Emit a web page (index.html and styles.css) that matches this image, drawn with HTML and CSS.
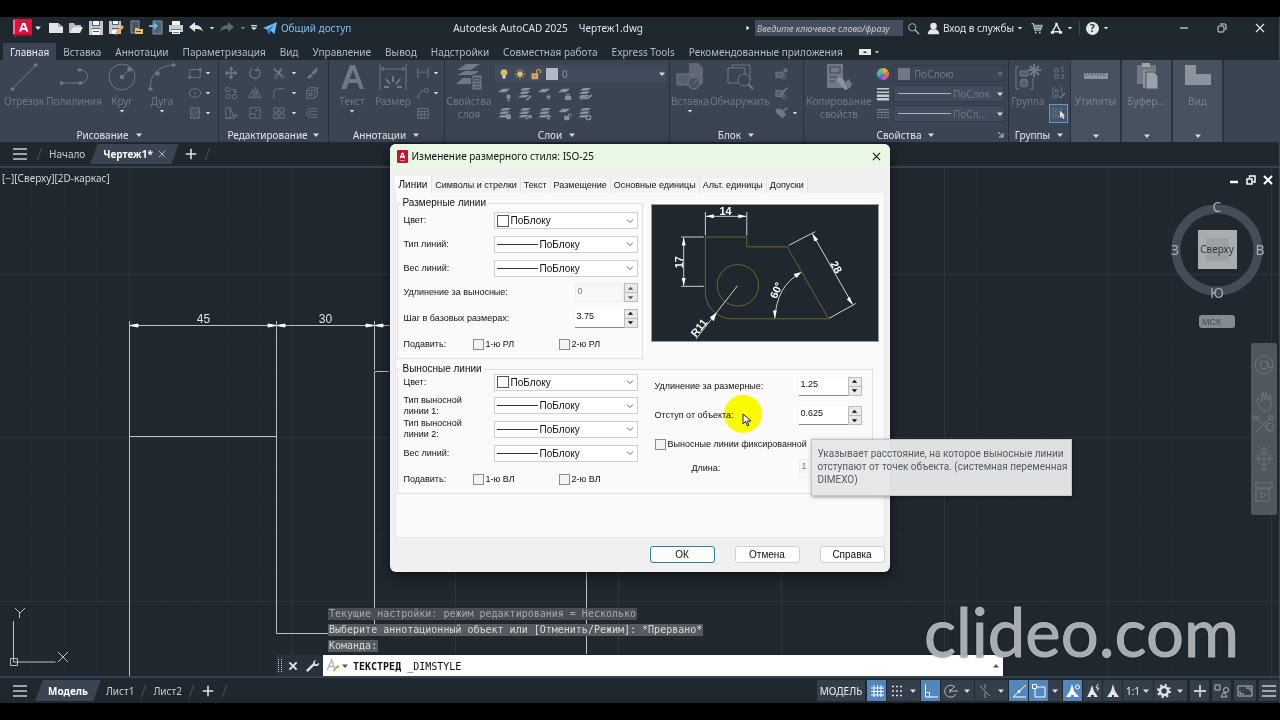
FILE: index.html
```html
<!DOCTYPE html>
<html lang="ru">
<head>
<meta charset="utf-8">
<title>Autodesk AutoCAD 2025 — Чертеж1.dwg</title>
<link rel="stylesheet" href="styles.css">
</head>
<body>
<svg class="defs" aria-hidden="true">
  <defs>
    <symbol id="down" viewBox="0 0 8 8"><path d="M1 2.500h6L4 6z" fill="currentColor"/></symbol>
    <symbol id="up" viewBox="0 0 8 8"><path d="M1 5.500h6L4 2z" fill="currentColor"/></symbol>
    <symbol id="chev" viewBox="0 0 8 8"><path d="M1 2.500l3 3 3-3" fill="none" stroke="currentColor"/></symbol>
    <symbol id="burger" viewBox="0 0 16 16"><path d="M1 3h14M1 8h14M1 13h14" stroke="currentColor" stroke-width="1.500"/></symbol>
    <symbol id="plus" viewBox="0 0 16 16"><path d="M8 2v12M2 8h12" stroke="currentColor" stroke-width="1.800"/></symbol>
    <symbol id="cross" viewBox="0 0 10 10"><path d="M1 1l8 8M9 1l-8 8" stroke="currentColor" stroke-width="1.200"/></symbol>
    <symbol id="layers" viewBox="0 0 16 16"><path d="M6 1h9l-4 3H2zM5 5h9l-4 3H1zM4 9h9l-4 3H0z" fill="currentColor"/></symbol>
    <symbol id="sheet" viewBox="0 0 16 16"><path d="M5 2h9l-5 4H0z" fill="currentColor"/></symbol>
  </defs>
</svg>

<div class="app">
  <header class="titlebar">
    <button class="logo" aria-label="Меню приложения"><svg viewBox="0 0 20 18"><path d="M1 1l3-1v18l-3-2z" fill="#f4708c"/><path d="M3 0h17v17H3z" fill="#dd1240"/><path d="M1 15h18v2H1z" fill="#a80d31"/><path d="M7 12.500L10.200 4h3l3.200 8.500h-2.300l-.6-1.800h-3.700l-.6 1.800zM10.300 9h2.600l-1.300-3.700z" fill="#fff"/></svg></button>
    <button class="tiny" aria-label="Ещё"><svg><use href="#down"/></svg></button>
    <div class="quick">
      <button aria-label="Создать"><svg viewBox="0 0 16 16"><path d="M1 3h9l5 4v6H1z" fill="#dfe2e6"/><path d="M10 3v4h5" fill="#a9afb8"/></svg></button>
      <button aria-label="Открыть"><svg viewBox="0 0 16 16"><path d="M1 13V3h5l1 2h6v2H5z" fill="#b9bfc7"/><path d="M5 7h10l-3 6H1z" fill="#e4e6e9"/></svg></button>
      <button aria-label="Сохранить"><svg viewBox="0 0 16 16"><path d="M1 1h14v14H1z" fill="#c4c8cd"/><path d="M4 1h8v5H4z" fill="#59616d"/><path d="M5 1h6v4H5zM4 9h8v6H4z" fill="#f4f4f4"/><path d="M4 8h8v1H4zM5 11h6v1H5z" fill="#59616d"/></svg></button>
      <button aria-label="Сохранить как"><svg viewBox="0 0 16 16"><path d="M1 1h12v13H1z" fill="#c4c8cd"/><path d="M4 1h7v4H4zM4 8h7v1H4z" fill="#59616d"/><path d="M5 1h5v3H5zM4 10h5v4H4z" fill="#fff"/><path d="M14 5l2 2-6 7-3 1 1-3z" fill="#e7b25c"/></svg></button>
      <button aria-label="Открыть из веба"><svg viewBox="0 0 16 16"><path d="M3 1h8v12H3z" fill="#4b535f" stroke="#8b929c"/><path d="M7 14V8h3l1 1h4v5z" fill="#f0bd62"/><path d="M8 11h5v1H8z" fill="#5c4a28"/></svg></button>
      <button aria-label="Сохранить в веб"><svg viewBox="0 0 16 16"><path d="M5 1h9v13H5z" fill="#56606c" stroke="#8b929c"/><path d="M1 5h5V2l4 4-4 4V7H1z" fill="#62b5ee"/></svg></button>
      <button aria-label="Печать"><svg viewBox="0 0 16 16"><path d="M4 1h8v4H4z" fill="#f4f4f4"/><path d="M1 5h14v7H1z" fill="#c9cdd2"/><path d="M4 9h8v5H4z" fill="#fff"/><path d="M3 9h10v1H3zM5 12h6v1H5z" fill="#4e7fb0"/></svg></button>
      <button aria-label="Отменить"><svg viewBox="0 0 16 16"><path d="M1 7l6-5v3c5 0 7 3 8 7-2-3-4-3-8-3v3z" fill="#e4e6e9"/></svg></button>
      <button class="arrow" aria-label="Список отмены"><svg><use href="#down"/></svg></button>
      <button aria-label="Повторить"><svg viewBox="0 0 16 16"><path d="M15 7L9 2v3C4 5 2 8 1 12c2-3 4-3 8-3v3z" fill="#5d6772"/></svg></button>
      <button class="arrow dim" aria-label="Список повтора"><svg><use href="#down"/></svg></button>
      <button class="arrow" aria-label="Настройка панели"><svg viewBox="0 0 8 8"><path d="M0 0h8v1.500H0zM0 3h8L4 7z" fill="#dfe2e6"/></svg></button>
    </div>
    <button class="share"><svg viewBox="0 0 16 16"><path d="M0 8L16 1l-3 14-4-4-3 4-1-5z" fill="#6cbcf2"/><path d="M5 10l8-6-5 7-2 4z" fill="#2c76ad"/></svg>Общий доступ</button>
    <h1>Autodesk AutoCAD 2025<span>Чертеж1.dwg</span></h1>
    <div class="account">
      <svg class="a6" viewBox="0 0 8 8"><path d="M2 1l4 3-4 3z" fill="#fff"/></svg>
      <input class="search" type="text" placeholder="Введите ключевое слово/фразу" aria-label="Поиск">
      <button aria-label="Найти"><svg viewBox="0 0 16 16" fill="none" stroke="#c5cad0"><circle cx="6.500" cy="6.500" r="4.500"/><path d="M10 10l5 5" stroke-width="1.500"/></svg></button>
      <button class="signin"><svg viewBox="0 0 16 16"><circle cx="8" cy="5" r="4" fill="#e4e6e9"/><path d="M1 15c0-4 3-6 5-6h4c2 0 5 2 5 6z" fill="#e4e6e9"/></svg>Вход в службы<svg class="a6"><use href="#down"/></svg></button>
      <button class="cart" aria-label="Магазин"><svg viewBox="0 0 16 16" fill="none" stroke="#b5bbc3" stroke-width="1.300"><path d="M2 2h2l2 8h7l2-6H5M5 6h9M6 8h8"/><path d="M6 13h2M11 13h2" stroke-width="2"/></svg></button>
      <button class="cart" aria-label="Autodesk App"><svg viewBox="0 0 16 16" fill="none" stroke="#e4e6e9"><path d="M8 3L3 12h10z" stroke-width="1.800"/><path d="M8 1v3M1 13h4M11 13h4" stroke-width="3"/></svg></button>
      <svg class="a6"><use href="#down"/></svg>
      <i class="vsep"></i>
      <button class="help" aria-label="Справка">?</button>
      <svg class="a6"><use href="#down"/></svg>
    </div>
    <div class="winctl">
      <button aria-label="Свернуть"><svg viewBox="0 0 10 10"><path d="M1 5h8" stroke="#fff"/></svg></button>
      <button aria-label="Восстановить"><svg viewBox="0 0 10 10" fill="none" stroke="#dfe2e6"><rect x="1" y="3" width="6" height="6" rx="1"/><path d="M3 1h5q1 0 1 1v5"/></svg></button>
      <button aria-label="Закрыть"><svg><use href="#cross"/></svg></button>
    </div>
  </header>

  <nav class="ribbon-tabs">
    <button class="on">Главная</button><button>Вставка</button><button>Аннотации</button><button>Параметризация</button><button>Вид</button><button>Управление</button><button>Вывод</button><button>Надстройки</button><button>Совместная работа</button><button>Express Tools</button><button>Рекомендованные приложения</button>
    <button class="collapse" aria-label="Свернуть ленту"><svg viewBox="0 0 22 8"><path d="M1 1h12v6H1z" fill="#e4e6e9"/><path d="M5 5h4L7 3z" fill="#222b36"/><path d="M17 3h4l-2 2.500z" fill="#c5cad0"/></svg></button>
  </nav>

  <div class="ribbon">
    <section class="panel draw">
      <div class="body">
        <button class="big"><svg viewBox="0 0 28 28" class="ln"><path d="M2 26L26 2"/><path d="M1 25h3v2H1zM24 1h3v2h-3z" fill="currentColor"/></svg>Отрезок</button>
        <button class="big"><svg viewBox="0 0 28 28" class="ln"><path d="M1 20h20a6.500 6.500 0 0 0 0-13h-2"/><path d="M0 19h3v2H0zM18 6h3v2h-3zM19 19h3v2h-3z" fill="currentColor"/></svg>Полилиния</button>
        <button class="big"><svg viewBox="0 0 28 28" class="ln"><circle cx="14" cy="14" r="13"/><path d="M14 14l8-8"/><path d="M12.500 12.500h3v3h-3zM20 5h3v3h-3z" fill="currentColor"/></svg>Круг<svg class="a6"><use href="#down"/></svg></button>
        <button class="big"><svg viewBox="0 0 28 28" class="ln"><path d="M2 26C2 12 10 3 26 2"/><path d="M1 25h3v2H1zM8 9h3v3H8zM24 1h3v2h-3z" fill="currentColor"/></svg>Дуга<svg class="a6"><use href="#down"/></svg></button>
        <div class="small c2">
          <button aria-label="Прямоугольник"><svg viewBox="0 0 16 16" class="ln"><path d="M2 4h12v9H2z"/><path d="M1 12h2v2H1zM13 3h2v2h-2z" fill="currentColor"/></svg></button><svg class="a6"><use href="#down"/></svg>
          <button aria-label="Эллипс"><svg viewBox="0 0 16 16" class="ln"><ellipse cx="8" cy="8" rx="6.500" ry="5"/><path d="M7 8h2M8 7v2"/></svg></button><svg class="a6"><use href="#down"/></svg>
          <button aria-label="Штриховка"><svg viewBox="0 0 16 16" class="ln"><path d="M3 2h10v12H3zM3 6l4-4M3 10l8-8M3 14l10-11M6 14l7-8M10 14l3-4"/></svg></button><svg class="a6"><use href="#down"/></svg>
        </div>
      </div>
      <button class="ptitle">Рисование<svg class="a8"><use href="#down"/></svg></button>
    </section>

    <section class="panel edit">
      <div class="body">
        <div class="small c5">
          <button aria-label="Перенести"><svg viewBox="0 0 16 16" class="ln"><path d="M8 2v12M2 8h12M6 4l2-2 2 2M6 12l2 2 2-2M4 6L2 8l2 2M12 6l2 2-2 2" stroke-width="1.600"/></svg></button>
          <button aria-label="Повернуть"><svg viewBox="0 0 16 16" class="ln"><path d="M5 3a6 6 0 1 0 6 0M11 1v4H7" stroke-width="1.300"/></svg></button>
          <button aria-label="Обрезать"><svg viewBox="0 0 16 16" class="ln"><path d="M2 3l9 8M11 3l-5 7" stroke-width="2"/><circle cx="5" cy="12" r="2"/><circle cx="12" cy="12" r="2"/></svg></button><svg class="a6"><use href="#down"/></svg>
          <button aria-label="Стереть"><svg viewBox="0 0 16 16"><path d="M14 1v5l-4 4-3-2zM6 9l3 2-3 3H2z" fill="currentColor"/></svg></button>
          <button aria-label="Копировать"><svg viewBox="0 0 16 16" class="ln"><circle cx="4" cy="4" r="2.500"/><circle cx="5" cy="12" r="2.500"/><circle cx="12" cy="12" r="2.500"/><path d="M8 4h5v4M11 6l2 2 2-2"/></svg></button>
          <button aria-label="Зеркало"><svg viewBox="0 0 16 16" class="ln"><path d="M8 1v14M6 4v9H1zM10 4v9h5z"/></svg></button>
          <button aria-label="Сопряжение"><svg viewBox="0 0 16 16" class="ln"><path d="M2 14V9q0-6 6-6h6"/></svg></button><svg class="a6"><use href="#down"/></svg>
          <button aria-label="Расчленить"><svg viewBox="0 0 16 16" class="ln"><path d="M2 5h9v9H2zM2 5l3-3h9l-3 3M14 2v9l-3 3M5 8h3v3H5z"/></svg></button>
          <button aria-label="Растянуть"><svg viewBox="0 0 16 16" class="ln"><path d="M2 2h5v12H2zM7 2l5 12H2M9 11h6M13 9l2 2-2 2"/></svg></button>
          <button aria-label="Масштаб"><svg viewBox="0 0 16 16" class="ln"><path d="M2 2h12v12H2zM2 9h6v5M9 7V5h3"/></svg></button>
          <button aria-label="Массив"><svg viewBox="0 0 16 16" class="ln"><path d="M2 2h5v5H2zM9 2h5v5H9zM2 9h5v5H2zM9 9h5v5H9z"/></svg></button><svg class="a6"><use href="#down"/></svg>
          <button aria-label="Подобие"><svg viewBox="0 0 16 16" class="ln"><path d="M14 3H7a5 5 0 0 0 0 10h7M14 6H7a2 2 0 0 0 0 4h7"/></svg></button>
        </div>
      </div>
      <button class="ptitle">Редактирование<svg class="a8"><use href="#down"/></svg></button>
    </section>

    <section class="panel anno">
      <div class="body">
        <button class="big"><svg viewBox="0 0 28 28"><path d="M3 26L12 2h5l9 24h-4.500l-2-6h-9l-2 6zM11.500 16h6.500L15 7z" fill="currentColor"/></svg>Текст<svg class="a6"><use href="#down"/></svg></button>
        <button class="big"><svg viewBox="0 0 28 28" class="ln"><path d="M1 1v26M27 1v26M2 6h24M5 4L2 6l3 2M23 4l3 2-3 2"/><path d="M14 13v6M7 16l4 5M21 16l-4 5M5 24h5M18 24h5" stroke-width="2"/></svg>Размер</button>
        <div class="small c2">
          <button aria-label="Линейный"><svg viewBox="0 0 16 16" class="ln"><path d="M2 2v12M14 2v12M2 7h12"/></svg></button><svg class="a6"><use href="#down"/></svg>
          <button aria-label="Выноска"><svg viewBox="0 0 16 16" class="ln"><path d="M2 13q2-7 7-8M1 13h3"/><circle cx="12" cy="5" r="2.500"/></svg></button><svg class="a6"><use href="#down"/></svg>
          <button aria-label="Таблица"><svg viewBox="0 0 16 16" class="ln"><path d="M2 3h12v11H2zM2 6h12M2 10h12M6 6v8M10 6v8"/></svg></button>
        </div>
      </div>
      <button class="ptitle">Аннотации<svg class="a8"><use href="#down"/></svg></button>
    </section>

    <section class="panel lay">
      <div class="body">
        <button class="big"><svg viewBox="0 0 28 28"><path d="M11 1h14l-9 6H2zM10 8h14l-5 4H2zM8 15h8v6H1z" fill="currentColor"/><path d="M17 12h10v15H17z" fill="currentColor" stroke="#3b4453"/><path d="M19 15h6v3h-6zM19 21h6M19 24h6" fill="none" stroke="#3b4453"/></svg>Свойства<br>слоя</button>
        <div class="laybox">
          <div class="laycombo">
            <svg viewBox="0 0 12 16"><circle cx="6" cy="6" r="4.500" fill="#d9bb62"/><path d="M4 10h4v4H4z" fill="#d4d8dc"/></svg>
            <svg viewBox="0 0 14 16"><circle cx="7" cy="8" r="3.500" fill="#d9c063"/><path d="M7 1v14M0 8h14M2 3l10 10M12 3L2 13" stroke="#d9c063"/></svg>
            <svg viewBox="0 0 14 16"><path d="M1 7h9v8H1z" fill="#d8a560"/><path d="M8 7V4q0-2 2.500-2T13 4v3" fill="none" stroke="#d8a560" stroke-width="1.600"/><path d="M5 10h1v2H5z" fill="#433c30"/></svg>
            <i class="sw"></i>
            <select aria-label="Слой"><option>0</option></select><svg class="a8"><use href="#down"/></svg>
          </div>
          <div class="layicons">
            <button aria-label="Отключить"><svg viewBox="0 0 16 16"><use href="#sheet"/><circle cx="12" cy="11" r="2.500" fill="currentColor"/><path d="M11 14h2v2h-2z" fill="currentColor"/></svg></button>
            <button aria-label="Изолировать"><svg viewBox="0 0 16 16"><use href="#layers"/><path d="M10 15l5-5" stroke="currentColor" stroke-width="2"/></svg></button>
            <button aria-label="Заморозить"><svg viewBox="0 0 16 16"><use href="#sheet"/><path d="M12 8v7M9 10l6 3M15 10l-6 3" stroke="currentColor"/></svg></button>
            <button aria-label="Блокировать"><svg viewBox="0 0 16 16"><use href="#sheet"/><path d="M8 10h7v5H8z" fill="currentColor"/><path d="M10 10V8h3v2" fill="none" stroke="currentColor"/></svg></button>
            <button aria-label="Сделать текущим"><svg viewBox="0 0 16 16"><use href="#layers"/><path d="M2 13h9l5-4" fill="none" stroke="currentColor" stroke-width="2"/></svg></button>
            <button aria-label="Включить все"><svg viewBox="0 0 16 16"><use href="#layers"/><circle cx="12" cy="11" r="3" fill="currentColor"/></svg></button>
            <button aria-label="Отменить изоляцию"><svg viewBox="0 0 16 16"><use href="#layers"/><path d="M9 14l5-3M12 10h3v3" fill="none" stroke="currentColor" stroke-width="1.500"/></svg></button>
            <button aria-label="Разморозить"><svg viewBox="0 0 16 16"><use href="#layers"/><path d="M12 8v7M9 11h6M10 9l4 5M14 9l-4 5" stroke="currentColor"/></svg></button>
            <button aria-label="Разблокировать"><svg viewBox="0 0 16 16"><use href="#sheet"/><path d="M7 10h6v5H7z" fill="currentColor"/><path d="M12 10V8h3v3" fill="none" stroke="currentColor"/></svg></button>
            <button aria-label="Копировать слой"><svg viewBox="0 0 16 16"><use href="#layers"/><circle cx="12" cy="12" r="2.500" fill="none" stroke="currentColor" stroke-width="1.500"/></svg></button>
          </div>
        </div>
      </div>
      <button class="ptitle">Слои<svg class="a8"><use href="#down"/></svg></button>
    </section>

    <section class="panel block">
      <div class="body">
        <button class="big"><svg viewBox="0 0 28 28"><path d="M13 0h9l5 5v16H13z" fill="currentColor" opacity=".7"/><path d="M1 11h15v11H1z" fill="#59606c" stroke="currentColor"/><circle cx="18" cy="20" r="6" fill="#4b5462" stroke="currentColor"/><path d="M18 20l3-3" stroke="currentColor"/></svg>Вставка<svg class="a6"><use href="#down"/></svg></button>
        <button class="big"><svg viewBox="0 0 28 28" class="ln"><path d="M6 5V2h18v15M2 5h17v7M2 5v15h11"/><circle cx="18" cy="17" r="6"/><path d="M22 21l5 5" stroke-width="2"/></svg>Обнаружить</button>
        <div class="small c2">
          <button aria-label="Создать блок"><svg viewBox="0 0 16 16" class="ln"><path d="M1 7h8v6H1z" fill="#59606c"/><circle cx="10" cy="12" r="2.500"/><path d="M12 2v6M9 5h6M10 3l4 4M14 3l-4 4"/></svg></button><i></i>
          <button aria-label="Редактор блоков"><svg viewBox="0 0 16 16" class="ln"><path d="M1 5h8v7H1z" fill="#59606c"/><circle cx="10" cy="12" r="2.500"/><path d="M7 10l7-8" stroke-width="2"/></svg></button><i></i>
          <button aria-label="Атрибуты"><svg viewBox="0 0 16 16"><path d="M1 3h6l6 7-5 4-7-7z" fill="currentColor"/><path d="M6 9l8-7" stroke="currentColor" stroke-width="2"/></svg></button><svg class="a6"><use href="#down"/></svg>
        </div>
      </div>
      <button class="ptitle">Блок<svg class="a8"><use href="#down"/></svg></button>
    </section>

    <section class="panel props">
      <div class="body">
        <button class="big"><svg viewBox="0 0 28 28"><path d="M2 1h16v24H2z" fill="currentColor"/><path d="M5 4h10v6H5zM5 14h8M5 18h5" fill="none" stroke="#3b4453"/><path d="M13 13l6 4 4 9-3 1-8-9z" fill="#8c929a"/><path d="M19 20l5-4 3 6-3 4z" fill="currentColor"/></svg>Копирование<br>свойств</button>
        <div class="pgrid">
          <svg viewBox="0 0 16 16"><path d="M8 8V1a7 7 0 0 1 6 3.500z" fill="#f1b12f"/><path d="M8 8l6-3.500a7 7 0 0 1 0 7z" fill="#f0704a"/><path d="M8 8l6 3.500A7 7 0 0 1 8 15z" fill="#c85ba8"/><path d="M8 8v7a7 7 0 0 1-6-3.500z" fill="#7a5cc4"/><path d="M8 8l-6 3.500a7 7 0 0 1 0-7z" fill="#3fb4cf"/><path d="M8 8L2 4.500A7 7 0 0 1 8 1z" fill="#6cc070"/></svg>
          <div class="pcombo off"><i class="sw"></i><select aria-label="Цвет объекта"><option>ПоСлою</option></select><svg class="a8"><use href="#down"/></svg></div>
          <svg viewBox="0 0 16 16"><path d="M1 2h14M1 6h14" stroke="#c5cad0" stroke-width="1.500"/><path d="M1 10h14M1 14h14" stroke="#c5cad0" stroke-width="3"/></svg>
          <div class="pcombo"><i class="rule"></i><select aria-label="Вес линий объекта"><option>ПоСлок</option></select><svg class="a8"><use href="#down"/></svg></div>
          <svg viewBox="0 0 16 16"><path d="M1 3h14M1 6h14" stroke="#8f96a0"/><path d="M1 9h14M1 12h14" stroke="#8f96a0" stroke-dasharray="3 1"/></svg>
          <div class="pcombo"><i class="rule"></i><select aria-label="Тип линий объекта"><option>ПоСл...</option></select><svg class="a8"><use href="#down"/></svg></div>
        </div>
      </div>
      <button class="ptitle">Свойства<svg class="a8"><use href="#down"/></svg></button>
      <svg class="launch" viewBox="0 0 8 8"><path d="M1 1l5 5M6 2v4H2" fill="none" stroke="#c5cad0"/></svg>
    </section>

    <section class="panel groups">
      <div class="body">
        <button class="big"><svg viewBox="0 0 28 28" class="ln"><path d="M5 4H2v22h3M16 26h3V15"/><circle cx="10" cy="20" r="4" fill="#59606c"/><path d="M6 8h8v5H6z" fill="#59606c"/><path d="M20 1v13M14 7h13M16 3l9 9M25 3l-9 9" stroke-width="2"/></svg>Группа</button>
        <div class="small c1">
          <button aria-label="Разгруппировать"><svg viewBox="0 0 16 16" class="ln"><path d="M3 3h4v4H3zM3 10h4v4H3zM10 2h3l-2 3 3 2M10 10h3v4h-3"/></svg></button>
          <button aria-label="Редактировать группу"><svg viewBox="0 0 16 16" class="ln"><path d="M3 2H1v12h2M4 4h3v3H4zM4 10h3v3H4zM9 2h2v6"/><path d="M9 14l6-6" stroke-width="2"/></svg></button>
          <button class="sel" aria-label="Выбор группы"><svg viewBox="0 0 16 16" class="ln"><path d="M3 2H1v12h2M4 4h3v3H4zM4 10h3v3H4zM9 2h2v4"/><path d="M9 5v9l2-2 2 3 1-1-1-3h2z" fill="#dfe2e6" stroke="none"/></svg></button>
        </div>
      </div>
      <button class="ptitle">Группы<svg class="a8"><use href="#down"/></svg></button>
    </section>

    <button class="fold"><svg viewBox="0 0 28 28"><path d="M2 11h24v6H2z" fill="currentColor"/><path d="M4 11v3M7 11v2M10 11v3M13 11v2M16 11v3M19 11v2M22 11v3" stroke="#4a5362"/></svg><span>Утилиты</span><svg class="a8"><use href="#down"/></svg></button>
    <button class="fold"><svg viewBox="0 0 28 28"><path d="M4 3h19v19H4z" fill="#747a83"/><path d="M9 1h8v4H9z" fill="#a0a5ac"/><path d="M10 8h10v18H10z" fill="#8e939b"/><path d="M13 10h8l4 4v13H13z" fill="#9da2a9" stroke="#4a5362"/></svg><span>Буфер...</span><svg class="a8"><use href="#down"/></svg></button>
    <button class="fold"><svg viewBox="0 0 28 28"><path d="M1 3h11v9h15v11H1z" fill="currentColor"/></svg><span>Вид</span><svg class="a8"><use href="#down"/></svg></button>
  </div>

  <nav class="filetabs">
    <button class="burger" aria-label="Меню чертежей"><svg><use href="#burger"/></svg></button>
    <i class="slash"></i>
    <button>Начало</button>
    <button class="cur"><span>Чертеж1*</span><svg><use href="#cross"/></svg></button>
    <button class="add" aria-label="Новый чертеж"><svg><use href="#plus"/></svg></button>
    <i class="slash"></i>
  </nav>

  <main class="canvas">
    <svg class="drawing" aria-hidden="true">
      <g transform="translate(0 -168)">
        <path class="gminor" d="M31.500 168v508M64.500 168v508M96.500 168v508M161.500 168v508M194.500 168v508M227.500 168v508M259.500 168v508M0 209.500h1280M0 241.500h1280M0 307.500h1280M0 339.500h1280M0 372.500h1280M0 404.500h1280M0 470.500h1280M0 502.500h1280M0 535.500h1280M0 568.500h1280M906.500 168v508M976.500 168v508M1009.500 168v508M1041.500 168v508M1139.500 168v508M1172.500 168v508"/>
        <path class="gmajor" d="M129.500 168v508M292.500 168v508M455.500 168v508M618.500 168v508M781.500 168v508M944.500 168v508M1107.500 168v508M1271.500 168v508M0 274.500h1280M0 437.500h1280M0 601.500h1280"/>
        <g class="draft">
          <path d="M129.500 321v355M276.500 321v312.500h310M586.500 560v94M129.500 436.500h147M374.500 321v49M389 371.500h-14.500V624M129 325.500h262"/>
          <path class="tip" d="M130 325.500l8-1.500v3zM276 325.500l-8-1.500v3zM277 325.500l8-1.500v3zM374 325.500l-8-1.500v3zM375 325.500l8-1.500v3z"/>
          <path d="M13.500 621v41h42M10.500 658.500h7v7h-7zM15 608l5 5 5-5M19.500 613v5M58 652l10 10M68 652l-10 10"/>
          <text x="203.500" y="323" text-anchor="middle">45</text>
          <text x="325.500" y="323" text-anchor="middle">30</text>
        </g>
      </g>
    </svg>
    <div class="vplabel">[−][Сверху][2D-каркас]</div>
    <div class="vpctl">
      <button aria-label="Свернуть вид"><svg viewBox="0 0 10 10"><path d="M1 7h8" stroke="#fff" stroke-width="2.500"/></svg></button>
      <button aria-label="Восстановить вид"><svg viewBox="0 0 10 10" fill="none" stroke="#fff" stroke-width="1.500"><path d="M1 4h5v5H1zM3.500 3V1H9v6H7"/></svg></button>
      <button aria-label="Закрыть вид"><svg viewBox="0 0 10 10"><path d="M1 1l8 8M9 1L1 9" stroke="#fff" stroke-width="2"/></svg></button>
    </div>
    <div class="cube">
      <svg viewBox="0 0 100 114">
        <circle cx="48" cy="58" r="41" fill="none" stroke="#444c57" stroke-width="9"/>
        <path d="M29 38h39v39H29z" fill="#a9adb0"/><path d="M37 46h23v23H37z" fill="#9da1a4"/>
        <g text-anchor="middle"><text class="face" x="48" y="61">Сверху</text><text x="48" y="20">С</text><text x="48" y="106">Ю</text><text x="6" y="63">З</text><text x="91" y="63">В</text></g>
      </svg>
      <button>МСК</button>
    </div>
    <div class="navbar">
      <svg viewBox="0 0 26 172" fill="none" stroke="#6c737a"><circle cx="13" cy="22" r="9"/><circle cx="13" cy="22" r="4"/><path d="M17 18v6q4 2 5-2"/><path d="M8 62q-4-6 0-6l3 3v-8M11 57l1-8 2 8 1-8 2 9 2-7 1 10q0 7-6 7-4 0-6-5"/><path d="M5 74l15 15M20 74L5 89M3 73h4v4H3zM18 73h4v4h-4z"/><circle cx="19" cy="84" r="4"/><path d="M13 104v24M4 116h18M9 108l4-4 4 4M9 124l4 4 4-4"/><circle cx="13" cy="116" r="6"/><path d="M5 140h16v5H5zM5 146h13v12H5z"/><path d="M10 149l5 3-5 3z" fill="#50575f"/></svg>
    </div>
    <div class="command">
      <div class="history">
        <p class="old">Текущие настройки: режим редактирования = Несколько</p>
        <p>Выберите аннотационный объект или [Отменить/Режим]: *Прервано*</p>
        <p>Команда:</p>
      </div>
      <div class="cmdline">
        <svg class="grip" viewBox="0 0 6 16"><path d="M1.500 1v14M4.500 1v14" stroke="#c5cad0" stroke-dasharray="1 1"/></svg>
        <button aria-label="Закрыть строку"><svg viewBox="0 0 10 10"><path d="M2 2l6 6M8 2L2 8" stroke="#e4e6e9" stroke-width="1.600"/></svg></button>
        <button class="wrench" aria-label="Адаптация"><svg viewBox="0 0 16 16"><path d="M2 14l7-7" stroke="#dfe2e6" stroke-width="2.500"/><path d="M9 8Q7 3 12 2l-2 3 2 2 3-2q0 5-6 3z" fill="#dfe2e6"/></svg></button>
        <div class="cmdinput">
          <svg class="apen" viewBox="0 0 16 16"><path d="M1 13L6 2l4 11M3 9h6" fill="none" stroke="#b5b9bd" stroke-width="1.500"/><path d="M8 14l5-6" stroke="#e5a550" stroke-width="2"/><path d="M13 9v1" stroke="#d05040" stroke-width="2"/></svg>
          <svg class="a8"><use href="#down"/></svg>
          <span><b>ТЕКСТРЕД</b> _DIMSTYLE</span>
          <svg class="a8 more"><use href="#up"/></svg>
        </div>
      </div>
    </div>
  </main>

  <footer class="status">
    <button class="burger" aria-label="Меню листов"><svg><use href="#burger"/></svg></button>
    <button class="cur"><span>Модель</span></button>
    <button>Лист1</button><i class="slash"></i>
    <button>Лист2</button><i class="slash"></i>
    <button class="add" aria-label="Новый лист"><svg><use href="#plus"/></svg></button><i class="slash"></i>
    <div class="tools">
      <button class="model">МОДЕЛЬ</button>
      <button class="blue" aria-label="Сетка"><svg viewBox="0 0 16 16"><path d="M5 2v12M8.500 2v12M12 2v12M2 5h13M2 8.500h13M2 12h13" stroke="#fff"/></svg></button>
      <button aria-label="Шаг"><svg viewBox="0 0 16 16"><path d="M3 3.500h12M3 8h12M3 12.500h12" stroke="#dfe2e6" stroke-width="1.600" stroke-dasharray="2 2"/></svg></button>
      <button class="arr" aria-label="Параметры шага"><svg class="a8"><use href="#down"/></svg></button>
      <button class="blue" aria-label="Орто"><svg viewBox="0 0 16 16" fill="none" stroke="#fff"><path d="M2.500 1v13H15M2.500 9.500h4V14"/></svg></button>
      <button aria-label="Полярное отслеживание"><svg viewBox="0 0 16 16" fill="none" stroke="#b5bbc3"><path d="M13 11a6 6 0 1 1-1-7M7 8h8M7 8l5-5"/><path d="M7 6v4"/></svg></button>
      <button class="arr" aria-label="Углы"><svg class="a8"><use href="#down"/></svg></button>
      <button aria-label="Изометрия"><svg viewBox="0 0 16 16" stroke="#8f96a0"><path d="M8 1v5M8 9v6M3 3l10 10"/></svg></button>
      <button class="arr" aria-label="Плоскости"><svg class="a8"><use href="#down"/></svg></button>
      <button class="blue" aria-label="Объектное отслеживание"><svg viewBox="0 0 16 16" fill="none" stroke="#fff"><path d="M15 2L2 14h13"/><circle cx="8" cy="8.500" r="1" fill="#fff"/></svg></button>
      <button class="blue" aria-label="Объектная привязка"><svg viewBox="0 0 16 16" fill="none" stroke="#fff"><path d="M4 4h10v10H4z"/><path d="M1.500 1.500h4v4h-4z" fill="#5287bd"/></svg></button>
      <button class="arr" aria-label="Привязки"><svg class="a8"><use href="#down"/></svg></button>
      <button class="blue" aria-label="Аннотативные объекты"><svg viewBox="0 0 16 16"><path d="M7 1l2 7 5 6H9V12H6v2H1l4-6z" fill="#fff"/><circle cx="12.500" cy="4" r="2" fill="none" stroke="#fff"/></svg></button>
      <button aria-label="Автомасштаб"><svg viewBox="0 0 16 16"><path d="M7 2l2 6 4 6H9V12H6v2H2l3-6z" fill="#e4e6e9"/><path d="M13 1l-2 4h3l-2 3" fill="none" stroke="#e4e6e9"/></svg></button>
      <button aria-label="Масштаб аннотаций"><svg viewBox="0 0 16 16"><path d="M8 1l2 7 4 6H9V12H7v2H2l4-6z" fill="#e4e6e9"/></svg></button>
      <button class="scale">1:1<svg class="a8"><use href="#down"/></svg></button>
      <button aria-label="Рабочее пространство"><svg viewBox="0 0 16 16" fill="none" stroke="#dfe2e6"><circle cx="8" cy="8" r="4" stroke-width="2.500"/><circle cx="8" cy="8" r="6" stroke-width="2" stroke-dasharray="2.300 2.400"/></svg></button>
      <button class="arr" aria-label="Пространства"><svg class="a8"><use href="#down"/></svg></button>
      <button class="gap" aria-label="Добавить"><svg><use href="#plus"/></svg></button>
      <button class="gap" aria-label="Изоляция"><svg viewBox="0 0 16 16" fill="none" stroke="#b5bbc3"><path d="M1 2h5v5H1zM7 14l3-5 3 5z"/><circle cx="12" cy="7" r="2.500"/></svg></button>
      <button class="gap wide" aria-label="Полный экран"><svg viewBox="0 0 16 16" fill="none" stroke="#b5bbc3"><path d="M1 3h14v10H1zM9 5h4v3M7 11H3V8"/></svg></button>
      <button class="gap" aria-label="Адаптация"><svg><use href="#burger"/></svg></button>
    </div>
  </footer>

  <form class="dialog" role="dialog" aria-label="Изменение размерного стиля">
    <div class="dtitle">
      <svg viewBox="0 0 12 14"><rect width="12" height="14" rx="1" fill="#c41230"/><path d="M3 9l2-6h2l2 6H7.500L7 8H5l-.5 1zM5.400 6.500h1.200L6 4.500z" fill="#fff"/><path d="M3.500 11h5v1h-5z" fill="#f2a0b0"/></svg>
      <h2>Изменение размерного стиля: ISO-25</h2>
      <button type="button" aria-label="Закрыть"><svg><use href="#cross"/></svg></button>
    </div>
    <div class="dtabs">
      <button type="button" class="on">Линии</button><button type="button">Символы и стрелки</button><button type="button">Текст</button><button type="button">Размещение</button><button type="button">Основные единицы</button><button type="button">Альт. единицы</button><button type="button">Допуски</button>
    </div>
    <div class="dpage">
      <div class="top">
        <fieldset class="dimlines">
          <legend>Размерные линии</legend>
          <div class="rows r1">
            <div class="row"><label for="c1">Цвет:</label><div class="combo"><i class="box"></i><select id="c1"><option>ПоБлоку</option></select><svg><use href="#chev"/></svg></div></div>
            <div class="row"><label for="c2">Тип линий:</label><div class="combo"><i class="line"></i><select id="c2"><option>ПоБлоку</option></select><svg><use href="#chev"/></svg></div></div>
            <div class="row"><label for="c3">Вес линий:</label><div class="combo"><i class="line"></i><select id="c3"><option>ПоБлоку</option></select><svg><use href="#chev"/></svg></div></div>
            <div class="row"><label for="n1">Удлинение за выносные:</label><div class="spin off"><input id="n1" type="text" value="0" disabled><div><button type="button" disabled aria-label="Больше"><svg><use href="#up"/></svg></button><button type="button" disabled aria-label="Меньше"><svg><use href="#down"/></svg></button></div></div></div>
            <div class="row"><label for="n2">Шаг в базовых размерах:</label><div class="spin"><input id="n2" type="text" value="3.75"><div><button type="button" aria-label="Больше"><svg><use href="#up"/></svg></button><button type="button" aria-label="Меньше"><svg><use href="#down"/></svg></button></div></div></div>
            <div class="row checks"><span>Подавить:</span><label><input type="checkbox">1-ю РЛ</label><label><input type="checkbox">2-ю РЛ</label></div>
          </div>
        </fieldset>
        <svg class="preview" viewBox="0 0 228 138" role="img" aria-label="Образец размеров">
          <g fill="none" stroke="#6f6a2b"><path d="M53.500 32.500h42v10h41l42 73H80a27 27 0 0 1-26.500-29z"/><circle cx="86.500" cy="81.500" r="21"/></g>
          <g fill="none" stroke="#cfd3d7"><path d="M53.500 7v24M95.500 7v24M54 11.500h41M29 32.500h23M29 82.500h23M31.500 33v49M138 41l27-14M179 115l27-15M162 29l41 72M86 82L44 136M124 115Q126 82 150 69"/></g>
          <g fill="#fff"><path d="M54 11.500l8-2v4zM95 11.500l-8-2v4zM31.500 33l-2 8h4zM31.500 82l-2-8h4zM162 29l2 8 4-2zM203 101l-6-5 3-3zM65 109l-7 5 4 4zM124 115l-2-8h4zM151 68l-8 2 3 4z"/></g>
          <g class="ptext"><text x="74" y="10">14</text><text transform="translate(31 58) rotate(-90)">17</text><text transform="translate(183 65) rotate(60)">28</text><text transform="translate(129 88) rotate(-67)">60°</text><text transform="translate(50 127) rotate(-52)">R11</text></g>
        </svg>
      </div>
      <fieldset class="extlines">
        <legend>Выносные линии</legend>
        <div class="cols">
          <div class="rows r2">
            <div class="row"><label for="c4">Цвет:</label><div class="combo"><i class="box"></i><select id="c4"><option>ПоБлоку</option></select><svg><use href="#chev"/></svg></div></div>
            <div class="row"><label for="c5">Тип выносной<br>линии 1:</label><div class="combo"><i class="line"></i><select id="c5"><option>ПоБлоку</option></select><svg><use href="#chev"/></svg></div></div>
            <div class="row"><label for="c6">Тип выносной<br>линии 2:</label><div class="combo"><i class="line"></i><select id="c6"><option>ПоБлоку</option></select><svg><use href="#chev"/></svg></div></div>
            <div class="row"><label for="c7">Вес линий:</label><div class="combo"><i class="line"></i><select id="c7"><option>ПоБлоку</option></select><svg><use href="#chev"/></svg></div></div>
            <div class="row checks"><span>Подавить:</span><label><input type="checkbox">1-ю ВЛ</label><label><input type="checkbox">2-ю ВЛ</label></div>
          </div>
          <div class="rows r3">
            <div class="row"><label for="n3">Удлинение за размерные:</label><div class="spin"><input id="n3" type="text" value="1.25"><div><button type="button" aria-label="Больше"><svg><use href="#up"/></svg></button><button type="button" aria-label="Меньше"><svg><use href="#down"/></svg></button></div></div></div>
            <div class="row"><label for="n4">Отступ от объекта:</label><div class="spin"><input id="n4" type="text" value="0.625"><div><button type="button" aria-label="Больше"><svg><use href="#up"/></svg></button><button type="button" aria-label="Меньше"><svg><use href="#down"/></svg></button></div></div></div>
            <div class="row"><label><input type="checkbox">Выносные линии фиксированной</label></div>
            <div class="row len"><label for="n5">Длина:</label><div class="spin off"><input id="n5" type="text" value="1" disabled></div></div>
          </div>
        </div>
      </fieldset>
    </div>
    <div class="dfoot"><button type="button" class="ok">ОК</button><button type="button">Отмена</button><button type="button">Справка</button></div>
    <div class="halo"></div>
    <svg class="pointer" viewBox="0 0 10 14"><path d="M1 1v10l2.500-2.500L5.500 13l1.500-.8-2-4.200h4z" fill="#fff" stroke="#222"/></svg>
    <div class="tip-box" role="tooltip">Указывает расстояние, на которое выносные линии отступают от точек объекта. (системная переменная DIMEXO)</div>
  </form>
  <div class="watermark">clideo.com</div>
</div>
</body>
</html>
```
FILE: styles.css
```css
* { box-sizing: border-box; }
body {
  margin: 0;
  min-height: 100vh;
  padding: 17px 0;
  background: #000;
  display: flex;
  font: 10px/14px "Noto Sans", "Open Sans", sans-serif;
  color: #c9cdd3;
}
button, input, select {
  font: inherit;
  color: inherit;
  background: none;
  border: 0;
  padding: 0;
  margin: 0;
}
button {
  display: flex;
  align-items: center;
  justify-content: center;
  white-space: nowrap;
}
select { appearance: none; min-width: 0; }
svg { display: block; flex: none; width: 16px; height: 16px; }
h1, h2, p { margin: 0; font-weight: 400; font-size: inherit; }
fieldset { margin: 0; padding: 0; min-width: 0; }
.defs { position: absolute; width: 0; height: 0; }
.a6 { width: 6px; height: 6px; color: #d8dbe0; }
.a8 { width: 8px; height: 8px; color: #d8dbe0; }
.ln { fill: none; stroke: currentColor; }

.app {
  position: relative;
  flex: 1;
  min-width: 0;
  display: flex;
  flex-direction: column;
  background: #1f272f;
  border-right: 1px solid #1f5a2c;
}

/* Title bar */
.titlebar {
  display: flex;
  align-items: center;
  height: 26px;
  padding: 0 0 4px 12px;
  color: #e1e4e8;
}
.logo svg { width: 20px; height: 18px; }
.tiny { width: 12px; }
.tiny svg { width: 8px; height: 8px; }
.quick { display: flex; margin-left: 2px; }
.quick button { width: 20px; }
.quick .arrow { width: 11px; }
.quick .arrow svg { width: 6px; height: 6px; }
.quick .dim { color: #77808b; }
.share { margin-left: 4px; color: #7fc0ee; gap: 4px; }
.share svg { width: 14px; height: 14px; }
.titlebar h1 { margin: 0 auto; white-space: nowrap; }
.titlebar h1 span { margin-left: 11px; }
.account { display: flex; align-items: center; gap: 4px; }
.search {
  width: 148px;
  height: 16px;
  padding: 0 2px;
  background: #454e5d;
  font-size: 9px;
  font-style: italic;
}
.search::placeholder { color: #c3c8d0; opacity: 1; }
.account svg:not(.a6) { width: 13px; height: 13px; }
.signin { gap: 3px; margin-left: 3px; }
.cart { margin-left: 3px; }
.vsep { width: 1px; height: 14px; margin: 0 2px; background: #3d4651; }
.help {
  width: 13px;
  height: 13px;
  border-radius: 50%;
  background: #e4e6e9;
  color: #222b36;
  font-weight: 700;
}
.winctl { display: flex; margin-left: 56px; }
.winctl button { width: 38px; }
.winctl svg { width: 10px; height: 10px; }

/* Ribbon */
.ribbon-tabs { display: flex; height: 17px; padding-left: 3px; color: #b4bac2; }
.ribbon-tabs button { padding: 0 7px; }
.ribbon-tabs .on { background: #3b4453; color: #eceef0; padding: 0 7px; }
.ribbon-tabs .collapse { padding-left: 8px; }
.ribbon-tabs .collapse svg { width: 22px; height: 8px; }
.ribbon {
  display: flex;
  height: 82px;
  padding-left: 1px;
  background: #3b4453;
  color: #707884;
}
.panel {
  position: relative;
  display: flex;
  flex-direction: column;
  border-right: 1px solid #28303b;
}
.draw { width: 218px; }
.edit { width: 110px; }
.anno { width: 116px; }
.lay { width: 225px; }
.block { width: 134px; }
.props { width: 205px; }
.groups { width: 62px; }
.body { flex: 1; display: grid; align-items: start; padding-top: 3px; }
.draw .body { grid-template-columns: 46px 54px 42px 38px 1fr; }
.edit .body { justify-content: start; }
.anno .body { grid-template-columns: 46px 36px 1fr; }
.lay .body { grid-template-columns: 48px 1fr; }
.block .body { grid-template-columns: 40px 60px 1fr; }
.props .body { grid-template-columns: 70px 1fr; }
.groups .body { grid-template-columns: 38px 1fr; }
.big { flex-direction: column; line-height: 13px; display: flex; }
.big svg { width: 28px; height: 28px; margin-bottom: 4px; }
.big .a6 { width: 6px; height: 6px; margin-top: 0; }
.small { display: grid; grid-auto-rows: 20px; align-items: center; justify-content: center; }
.small svg { width: 14px; height: 14px; }
.small .a6 { width: 6px; height: 6px; }
.c2 { grid-template-columns: 20px 10px; }
.c5 { grid-template-columns: 24px 24px 24px 8px 26px; }
.c1 { grid-template-columns: 19px; }
.sel { height: 19px; border: 1px solid #5b9bd0; background: #43566c; }
.ptitle { height: 14px; gap: 6px; color: #e1e4e8; }
.edit .ptitle { gap: 4px; }
.launch { position: absolute; right: 3px; bottom: 3px; width: 8px; height: 8px; }
.laybox { padding: 2px 3px 0 2px; }
.laycombo {
  display: flex;
  align-items: center;
  gap: 4px;
  height: 17px;
  padding: 0 0 0 3px;
  background: #424b5b;
  color: #8b929c;
}
.laycombo svg:not(.a8) { width: 12px; height: 12px; }
.laycombo select, .pcombo select { flex: 1; }
.sw { width: 12px; height: 12px; background: #b4bac4; }
.layicons {
  display: grid;
  grid-template-columns: repeat(5, 20px);
  grid-auto-rows: 20px;
  margin-top: 2px;
  color: #8a919b;
}
.layicons svg { width: 14px; height: 14px; }
.pgrid {
  display: grid;
  grid-template-columns: 14px 1fr;
  grid-auto-rows: 17px;
  gap: 3px;
  align-items: center;
  padding: 2px 3px 0 2px;
}
.pgrid > svg { width: 14px; height: 14px; }
.pcombo {
  display: flex;
  align-items: center;
  gap: 2px;
  height: 17px;
  padding-left: 4px;
  border: 1px solid #323a47;
  background: #424b5b;
}
.off .a8 { color: #6a727e; }
.pcombo.off { background: none; gap: 4px; }
.pcombo .sw { background: #727782; }
.rule { width: 53px; height: 1px; background: #aeb4bd; }
.fold {
  width: 51px;
  flex-direction: column;
  justify-content: flex-start;
  padding-top: 2px;
  background: #475160;
  border-right: 2px solid #2b333f;
  color: #8d939c;
}
.fold svg { width: 28px; height: 28px; }
.fold span { margin: 4px 0 24px; color: #79818c; }
.fold .a8 { width: 8px; height: 8px; }

/* Drawing and layout tabs */
.filetabs, .status { display: flex; align-items: center; height: 26px; }
.filetabs { border-bottom: 2px solid #3a434d; }
.burger { width: 39px; }
.slash { width: 1px; height: 12px; background: #4a535e; transform: skewX(-20deg); }
.filetabs button:not(.burger) { padding: 0 9px; }
.cur { position: relative; z-index: 0; align-self: stretch; color: #fff; font-weight: 700; }
.cur::before {
  content: "";
  position: absolute;
  z-index: -1;
  inset: 2px 0 2px 0;
  background: #3b4453;
  transform: skewX(-20deg);
}
.filetabs .cur { gap: 5px; }
.cur svg { width: 8px; height: 8px; color: #b5bbc3; }
.add svg { width: 14px; height: 14px; color: #e1e4e8; }
.status { border-top: 2px solid #3a434d; height: 27px; }
.status > button:not(.burger) { padding: 0 9px; }
.tools { display: flex; align-items: center; height: 21px; margin-left: auto; margin-right: 1px; gap: 1px; }
.tools button { width: 19px; height: 21px; background: #343d4a; }
.tools .model { width: 48px; margin-right: 1px; color: #eceef0; }
.tools .blue { background: #5287bd; }
.tools .arr { width: 14px; margin-left: -1px; }
.tools .scale { width: 30px; gap: 2px; color: #eceef0; }
.tools .gap { margin-left: 2px; }
.tools .wide { width: 22px; }

/* Model space */
.canvas { position: relative; flex: 1; min-height: 508px; overflow: hidden; }
.drawing { position: absolute; inset: 0; width: 100%; height: 100%; }
.gminor { stroke: #212a32; fill: none; }
.gmajor { stroke: #2b353d; fill: none; }
.draft { stroke: #bcc1c5; fill: none; }
.draft .tip { fill: #fff; stroke: #fff; stroke-width: 1; }
.draft text { fill: #dfe2e4; stroke: none; font: 12px "Liberation Sans", sans-serif; }
.vplabel { padding: 3px 2px; color: #d2d6da; position: relative; }
.vpctl { position: absolute; right: 6px; top: 7px; display: flex; gap: 7px; }
.vpctl svg { width: 10px; height: 10px; }
.cube { position: absolute; right: 10px; top: 24px; width: 100px; text-align: center; }
.cube svg { width: 100px; height: 114px; }
.cube text { fill: #a9aeb3; font-size: 14px; }
.cube .face { fill: #32383e; font-size: 10px; }
.cube button {
  width: 36px;
  height: 13px;
  margin: 9px 0 0 30px;
  padding-left: 3px;
  justify-content: flex-start;
  border-radius: 3px;
  background: #868b92;
  color: #42484f;
  font: 9px "Liberation Sans", sans-serif;
}
.navbar { position: absolute; right: 2px; top: 175px; background: #50575f; border-radius: 2px; }
.navbar svg { width: 26px; height: 172px; }
.command { position: absolute; left: 276px; right: 276px; bottom: 0; font: 10px/12px "DejaVu Sans Mono", monospace; }
.history { padding-left: 52px; display: flex; flex-direction: column; align-items: flex-start; gap: 4px; margin-bottom: 3px; }
.history p { padding: 0 1px; background: #555b60; color: #d8dbdd; white-space: nowrap; }
.history .old { background: #484e54; color: #a4a9ad; }
.cmdline { display: flex; align-items: center; height: 21px; background: #28313b; }
.grip { width: 8px; height: 16px; }
.cmdline button { width: 17px; }
.cmdline button svg { width: 12px; height: 12px; }
.cmdline .wrench { width: 22px; }
.cmdline .wrench svg { width: 15px; height: 15px; }
.cmdinput { flex: 1; display: flex; align-items: center; align-self: stretch; background: #fff; color: #111; padding: 0 3px; }
.cmdinput .a8 { color: #555; }
.apen { width: 15px; height: 15px; }
.cmdinput span { margin-left: 4px; padding-top: 2px; }
.more { margin-left: auto; }
.watermark {
  position: absolute;
  right: 40px;
  bottom: 36px;
  font: 400 67px/72px Lato, sans-serif;
  color: rgba(176, 181, 185, .95);
  -webkit-text-stroke: 1px rgba(176, 181, 185, .95);
  text-shadow: 0 0 2px #0c1116;
}

/* Dimension style dialog */
.dialog {
  position: absolute;
  left: 50%;
  top: 127px;
  width: 500px;
  margin-left: -250px;
  padding: 0 5px 9px;
  border-radius: 6px;
  background: #f0f0f1;
  box-shadow: 0 3px 12px rgba(0, 0, 0, .6);
  color: #111;
  font: 10px/11px "Liberation Sans", Arial, sans-serif;
}
.dtitle {
  display: flex;
  align-items: center;
  gap: 4px;
  height: 24px;
  margin: 0 -5px;
  padding: 0 6px 0 7px;
  border-radius: 6px 6px 0 0;
  background: #e9f8e5;
  font: 10px/14px "Noto Sans", sans-serif;
}
.dtitle > svg { width: 11px; height: 13px; }
.dtitle button { margin-left: auto; width: 14px; height: 20px; }
.dtitle button svg { width: 9px; height: 9px; }
.dtabs { display: flex; height: 25px; padding: 10px 0 0 0; font-size: 9px; }
.dtabs button { padding: 0 3px; border-right: 1px solid #e3e3e4; background: #f4f4f5; }
.dtabs .on { background: #fbfbfb; padding: 0 4px; margin-top: -2px; font-size: 10px; }
.dpage { min-height: 345px; padding: 4px 5px 0 1px; background: #fafafa; border: 1px solid #e8e8e8; border-top: 0; }
.top { display: flex; align-items: flex-start; gap: 8px; }
fieldset { border: 1px solid #e0e0e2; }
legend { margin-left: 3px; padding: 0 2px; line-height: 12px; }
.dimlines { flex: 0 0 246px; }
.extlines { margin: 4px 6px 0 0; }
.rows { display: grid; padding: 0 4px 0 6px; }
.r1 { grid-template-rows: 23px 24px 24px 25px 26px 27px; }
.r2 { grid-template-rows: 24px 23px 24px 24px 28px; }
.cols { display: grid; grid-template-columns: 244px 1fr; margin-top: -5px; }
.row { display: flex; align-items: center; justify-content: space-between; }
.row label, .row span { font-size: 9px; }
.combo {
  display: flex;
  align-items: center;
  width: 144px;
  height: 17px;
  padding: 0 3px 0 2px;
  border: 1px solid #cfcfd1;
  background: #fff;
}
.combo select { flex: 1; }
.combo svg { width: 8px; height: 8px; color: #666; }
.box { width: 12px; height: 12px; margin-right: 2px; border: 1px solid #555; }
.line { width: 41px; height: 1px; margin-right: 2px; background: #333; }
.spin { display: flex; width: 63px; height: 19px; }
.spin input { flex: 1; min-width: 0; padding: 0 2px 3px; background: #fff; border-bottom: 1px solid #8a8a8a; font-size: 9px; }
.spin > div { display: grid; width: 14px; border: 1px solid #bdbdbf; background: #e9e9ea; }
.spin button + button { border-top: 1px solid #bdbdbf; }
.spin button svg { width: 7px; height: 7px; color: #111; }
.spin.off input { background: #f7f7f8; color: #777; border: 1px solid #eee; }
.spin.off svg { color: #555; }
.checks { display: grid; grid-template-columns: 69px 86px 1fr; }
label:has([type="checkbox"]) { display: flex; align-items: center; gap: 2px; white-space: nowrap; }
[type="checkbox"] { appearance: none; width: 11px; height: 11px; border: 1px solid #8c8c8e; background: #f3f3f3; }
.r3 { grid-template-rows: 30px 29px 29px 18px; padding: 1px 10px 0 13px; }
.len label { margin-left: 37px; }
.preview { flex: 1; height: 138px; margin-top: 7px; background: #1f272f; border: 1px solid #9a9a9c; }
.ptext { fill: #fff; font: 700 11px "Liberation Sans", sans-serif; text-anchor: middle; }
.dfoot { display: flex; justify-content: flex-end; gap: 20px; padding-top: 8px; }
.dfoot button { width: 65px; height: 17px; border: 1px solid #d0d0d2; border-radius: 3px; background: #fdfdfd; }
.dfoot .ok { border-color: #2f7f96; }
.halo { position: absolute; left: 334px; top: 251px; width: 38px; height: 38px; border-radius: 50%; background: #ffff00; mix-blend-mode: multiply; }
.pointer { position: absolute; left: 352px; top: 269px; width: 10px; height: 14px; }
.tip-box {
  position: absolute;
  left: 421px;
  top: 295px;
  width: 261px;
  padding: 7px 0 9px 6px;
  border: 1px solid #c4c6c9;
  background: rgba(229, 230, 232, .97);
  box-shadow: 1px 1px 4px rgba(0, 0, 0, .4);
  color: #565b61;
  font: 10px/13px Roboto, sans-serif;
}
```
